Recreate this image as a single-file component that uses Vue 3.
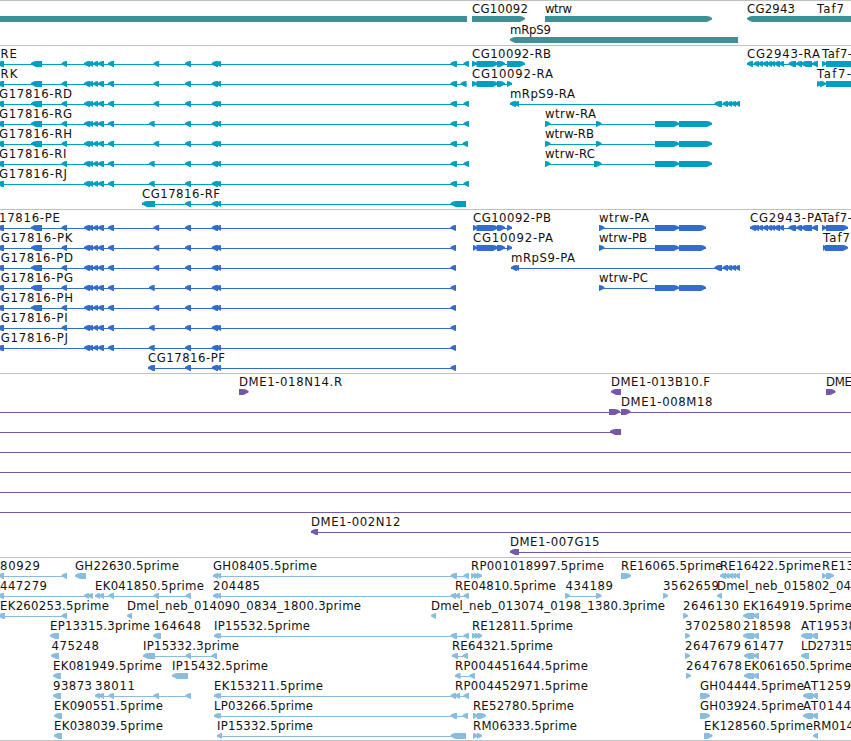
<script setup>
// Left-pointing feature runs shared by several rows: [start, end, direction]
const L = (...pairs) => pairs.map(([a, b]) => [a, b, -1])
const R = (...pairs) => pairs.map(([a, b]) => [a, b, 1])

const cluster = [[84, 90], [88, 93], [93, 98], [98, 104], [108, 114]]
const pair = [[185, 191], [211.7, 218], [216, 221]]

function spliced({ exon = true, third = true, mid = 153.5, tail }) {
  return L(
    [-3, 4],
    ...(exon ? [[31, 42]] : []),
    ...(third ? [[61.5, 67]] : []),
    ...cluster, [mid, mid + 5.7], ...pair, ...tail,
  )
}
const row = (labels, lines, shapes) => ({ labels, lines, shapes })

const utr = [[450.5, 457], [463.5, 469]]
const cds = [[450.5, 456]]
const cg10092 = (s) => R([s, 477], [476.5, 498], [497, 505])
const rps = (s) => L([s, s + 6], [s + 4, 519], [714.5, 722], [722.5, 728], [727, 732], [731, 736], [735, 740])
const cg2943 = (s) => L([s, s + 6], [753.5, 759], [758, 763], [762.5, 768], [767, 772], [771, 775], [774, 780], [779, 784],
  [788.5, 796], [796, 802], [801, 812], [812, 818])
const wtrwT = (s) => R([545, 550.5], [s, 601.5], [655, 679], [679, 712])
const wtrwP = R([599, 604.5], [655, 679], [679, 706])
const estPair = (s) => L([s, s + 5], [s + 3.5, 221])
const estFive = L([95, 100], [99, 104], [108.5, 114], [153.5, 159], [185.5, 191])
const three = (s) => R([s, s + 4], [s + 3, s + 7.5], [s + 6, 482])

const tracks = [
  {
    name: 'genes', rowHeight: 21, rows: [
      row([[472, 528, 'CG10092'], [545, 572, 'wtrw'], [747, 795, 'CG2943'], [817, 844, 'Taf7']], [],
        [[-10, 467, 0], ...R([472, 525], [545, 712]), ...L([747, 870])]),
      row([[510, 551, 'mRpS9']], [], [[510, 738, -1]]),
    ],
  },
  {
    name: 'transcripts', rowHeight: 20, rows: [
      row([[0.5, 17, 'RE'], [472, 551, 'CG10092-RB'], [747, 820, 'CG2943-RA'], [822, 852, 'Taf7-']],
        [[0, 469], [472, 525], [747, 818], [822, 851]],
        [...spliced({ tail: utr }), ...cg10092(472), ...R([507, 525]), ...cg2943(747), ...R([822, 826.5], [826, 870])]),
      row([[0.5, 17.5, 'RK'], [472, 553, 'CG10092-RA'], [817, 851, 'Taf7-']],
        [[0, 467], [472, 512]],
        [...spliced({ tail: [[450.5, 457], [460.7, 466.5]] }), ...cg10092(472), ...R([507, 512], [817, 822], [820, 826], [826, 870])]),
      row([[-1, 72, 'G17816-RD'], [510, 575, 'mRpS9-RA']],
        [[0, 469], [510, 740]], [...spliced({ tail: utr }), ...rps(510)]),
      row([[-1, 72, 'G17816-RG'], [545, 596, 'wtrw-RA']],
        [[0, 469], [545, 712]], [...spliced({ mid: 149, tail: utr }), ...wtrwT(596)]),
      row([[-1, 72, 'G17816-RH'], [545, 594, 'wtrw-RB']],
        [[0, 468], [545, 712]], [...spliced({ tail: [[450.5, 457], [462.5, 468]] }), ...wtrwT(596)]),
      row([[-1, 66.5, 'G17816-RI'], [545, 595, 'wtrw-RC']],
        [[0, 469], [545, 712]], [...spliced({ exon: false, mid: 149, tail: utr }), ...wtrwT(594)]),
      row([[-1, 67, 'G17816-RJ']],
        [[0, 469]], [...spliced({ exon: false, third: false, mid: 149, tail: utr })]),
      row([[142, 220, 'CG17816-RF']],
        [[142, 466]], L([142, 155], ...pair, [450.5, 466])),
    ],
  },
  {
    name: 'coding', rowHeight: 20, rows: [
      row([[-1, 60, '17816-PE'], [473, 551, 'CG10092-PB'], [599, 649, 'wtrw-PA'], [750, 822, 'CG2943-PA'], [821.5, 852, 'Taf7-']],
        [[0, 456], [473, 512], [599, 706], [750, 818], [822, 848]],
        [...spliced({ tail: cds }), ...cg10092(473), ...R([507, 512]), ...wtrwP, ...cg2943(750), ...R([822, 826.5], [826, 848])]),
      row([[0.7, 72.5, 'G17816-PK'], [473, 553, 'CG10092-PA'], [599, 647, 'wtrw-PB'], [823, 850, 'Taf7']],
        [[0, 456], [473, 512], [599, 706]],
        [...spliced({ tail: cds }), ...cg10092(473), ...R([507, 512]), ...wtrwP, ...R([823, 826], [825, 848])]),
      row([[0.7, 73, 'G17816-PD'], [511, 575, 'mRpS9-PA']],
        [[0, 456], [511, 740]], [...spliced({ tail: cds }), ...rps(511)]),
      row([[0.7, 73, 'G17816-PG'], [599, 648, 'wtrw-PC']],
        [[0, 456], [599, 706]], [...spliced({ mid: 149, tail: cds }), ...wtrwP]),
      row([[0.7, 73, 'G17816-PH']], [[0, 456]], spliced({ tail: cds })),
      row([[0.7, 67.7, 'G17816-PI']], [[0, 456]], spliced({ exon: false, mid: 149, tail: cds })),
      row([[0.7, 68, 'G17816-PJ']], [[0, 456]], spliced({ exon: false, third: false, mid: 149, tail: cds })),
      row([[148, 225, 'CG17816-PF']], [[148, 456]], L([148, 155], ...pair, ...cds)),
    ],
  },
  {
    name: 'clones', rowHeight: 20, rows: [
      row([[239, 342, 'DME1-018N14.R'], [611, 710, 'DME1-013B10.F'], [826, 852, 'DME']], [],
        [...R([239, 248.5]), ...L([611, 621]), ...R([826, 835.5])]),
      row([[621, 712.5, 'DME1-008M18']], [[0, 851]], R([609, 620], [621, 630.5])),
      row([], [[0, 621]], L([610, 621])),
      row([], [[0, 851]], []),
      row([], [[0, 851]], []),
      row([], [[0, 851]], []),
      row([], [[0, 851]], []),
      row([[311, 400.5, 'DME1-002N12']], [[311, 851]], L([311, 318])),
      row([[510, 599.5, 'DME1-007G15']], [[510, 851]], L([510, 519])),
    ],
  },
  {
    name: 'ests', rowHeight: 20, rows: [
      row([[0, 40, '80929'], [75, 179, 'GH22630.5prime'], [213, 317, 'GH08405.5prime'], [471, 604, 'RP001018997.5prime'], [621, 722.5, 'RE16065.5prime'], [720, 821, 'RE16422.5prime'], [822, 854, 'RE13']],
        [[0, 67], [213, 469]],
        [...L([-2, 4], [61.5, 67], [75, 86]), ...estPair(213), ...L([450.5, 457], [463.5, 469]), ...three(471), ...R([621, 631]),
          ...L([720, 726], [725, 729.5], [728.5, 733], [732, 736], [735, 740]), ...R([822, 826], [826, 834])]),
      row([[0, 47, '447279'], [95, 204, 'EK041850.5prime'], [213, 260, '204485'], [455, 556, 'RE04810.5prime'], [565.5, 613, '434189'], [663, 719, '3562659'], [717, 851, 'Dmel_neb_015802_04']],
        [[0, 93], [95, 191], [213, 469], [565, 601]],
        [...L([-2, 4], [84, 89], [88, 93]), ...estFive, ...estPair(213), ...L([450.5, 456], [455, 460], [463.5, 469]), ...R([565, 570], [596, 601.5], [663, 668]), ...L([717, 722])]),
      row([[0, 109, 'EK260253.5prime'], [127, 361, 'Dmel_neb_014090_0834_1800.3prime'], [431, 665, 'Dmel_neb_013074_0198_1380.3prime'], [683, 739, '2646130'], [743, 852, 'EK164919.5prime']],
        [[0, 67]],
        [...L([-2, 5], [61.5, 67], [127, 132], [431, 436]), ...R([683, 688]), ...L([743, 754], [753, 759])]),
      row([[50, 150, 'EP13315.3prime'], [153.5, 201, '164648'], [214, 310, 'IP15532.5prime'], [472, 573, 'RE12811.5prime'], [685, 741, '3702580'], [743, 791, '218598'], [801, 856, 'AT19538']],
        [[214, 469]],
        [...L([50, 59], [153, 161]), ...estPair(214), ...L([450.5, 457], [463.5, 469]), ...three(472), ...R([685, 690]), ...L([743, 754], [753, 759], [801, 812], [811, 818])]),
      row([[51.5, 99, '475248'], [143, 239, 'IP15332.3prime'], [452, 553, 'RE64321.5prime'], [685, 741, '2647679'], [744, 784, '61477'], [801, 853, 'LD27315']],
        [[143, 217], [452, 468]],
        [...L([51, 59], [143, 155], [185.5, 191], [211.5, 217], [452, 458], [462.5, 468]), ...R([685, 690]), ...L([744, 754], [753, 759], [801, 809])]),
      row([[53, 162, 'EK081949.5prime'], [172, 268, 'IP15432.5prime'], [455, 588, 'RP004451644.5prime'], [686, 742, '2647678'], [744, 852, 'EK061650.5prime']],
        [[455, 475]],
        [...L([53, 61], [172, 188], [455, 460.5], [469.5, 475]), ...R([686, 691]), ...L([744, 754], [753, 759])]),
      row([[53, 92, '93873'], [95, 135, '38011'], [214, 323, 'EK153211.5prime'], [455, 588, 'RP004452971.5prime'], [700, 804, 'GH04444.5prime'], [803, 851, 'AT1259']],
        [[95, 191], [214, 469]],
        [...L([53, 61]), ...estFive, ...estPair(214), ...L([450.5, 456], [455, 460], [463.5, 469]), ...R([700, 710]), ...L([803, 813], [812, 818])]),
      row([[54, 163, 'EK090551.5prime'], [214, 313, 'LP03266.5prime'], [473, 574, 'RE52780.5prime'], [700, 804, 'GH03924.5prime'], [803, 851, 'AT0144']],
        [[214, 468]],
        [...L([54, 62]), ...estPair(214), ...L([450.5, 457], [462.5, 468]), ...R([473, 478], [477, 486], [700, 710]), ...L([803, 813], [812, 818])]),
      row([[54, 163, 'EK038039.5prime'], [217, 313, 'IP15332.5prime'], [473, 577, 'RM06333.5prime'], [704, 813, 'EK128560.5prime'], [813, 854, 'RM014']],
        [[217, 466]],
        [...L([54, 62], [217, 222], [450.5, 466]), ...R([473, 478], [477, 482], [704, 712.5]), ...L([813, 818])]),
    ],
  },
]

// Box six pixels tall, with a head of at most five pixels at the pointing end
function outline([a, b, dir]) {
  if (!dir) return `${a},15 ${b},15 ${b},21 ${a},21`
  const h = Math.min(5, b - a)
  const tip = dir < 0 ? a : b
  const base = dir < 0 ? b : a
  const s = dir < 0 ? 1 : -1
  return `${tip},17 ${tip + s * h * 0.5},15.6 ${tip + s * h},15 ${base},15 ${base},21 ${tip + s * h},21 ${tip + s * h * 0.5},19.8 ${tip},18.4`
}
</script>

<template>
  <main class="browser">
    <section v-for="t in tracks" :key="t.name" class="track" :class="t.name">
      <svg v-for="(r, i) in t.rows" :key="i" class="row" width="851" :height="t.rowHeight">
        <rect v-for="(l, j) in r.lines" :key="'l' + j" :x="l[0]" y="18" :width="l[1] - l[0]" height="1" />
        <polygon v-for="(s, j) in r.shapes" :key="'s' + j" :points="outline(s)" />
        <text v-for="(l, j) in r.labels" :key="'t' + j" :x="l[0]" y="12" :textLength="l[1] - l[0]">{{ l[2] }}</text>
      </svg>
    </section>
  </main>
</template>

<style>
body {
  background: #fff;
  overflow: hidden;
}
</style>

<style scoped>
.browser {
  display: flex;
  flex-direction: column;
  width: 851px;
  height: 741px;
  box-sizing: border-box;
  overflow: hidden;
  border-bottom: 1px solid #c0c0c0;
}
.track {
  display: flex;
  flex-direction: column;
  flex: none;
  border-top: 1px solid #c0c0c0;
  padding-bottom: 3px;
}
.row {
  display: block;
  flex: none;
  overflow: visible;
}
.genes {
  fill: #408f95;
  padding-bottom: 2px;
}
.transcripts {
  fill: #009fc1;
}
.coding {
  fill: #326ccc;
}
.clones {
  fill: #7658a8;
}
.ests {
  fill: #88bddf;
  padding-bottom: 2px;
}
text {
  fill: #111;
  font-family: "DejaVu Sans", sans-serif;
  font-size: 11.7px;
}
</style>
